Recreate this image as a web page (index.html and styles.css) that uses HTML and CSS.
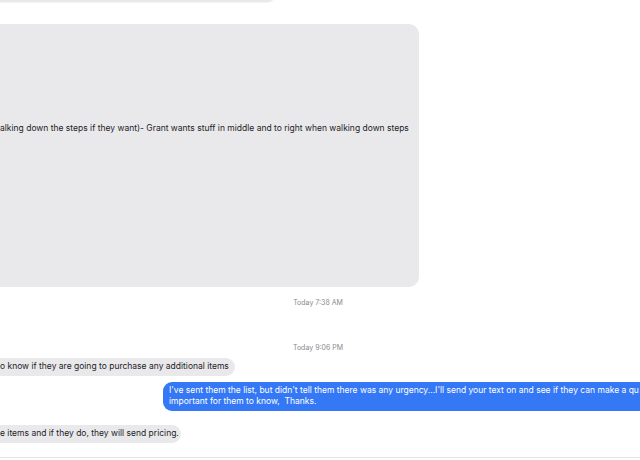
FILE: index.html
```html
<!DOCTYPE html>
<html lang="en">

<head>
    <meta charset="UTF-8">
    <meta name="viewport" content="width=device-width, initial-scale=1.0">
    <title>Messages</title>
    <link rel="stylesheet" href="styles.css">
</head>

<body>
    <div class="chat">
        <!-- Earlier messages -->
        <div class="bubble incoming top-cut"></div>

        <div class="bubble incoming big">
            <p>alking down the steps if they want)- Grant wants stuff in middle and to right when walking down steps</p>
        </div>

        <div class="stamp first">Today 7:38 AM</div>
        <div class="stamp second">Today 9:06 PM</div>

        <div class="bubble incoming small one">
            <p>o know if they are going to purchase any additional items</p>
        </div>

        <div class="bubble outgoing">
            <p>I've sent them the list, but didn't tell them there was any urgency...I'll send your text on and see if they can make a qu<br>important for them to know,&nbsp; Thanks.</p>
        </div>

        <div class="bubble incoming small two">
            <p>e items and if they do, they will send pricing.</p>
        </div>
    </div>

    <div class="composer-edge"></div>
</body>

</html>
```

FILE: styles.css
```css
:root {
    --gray-bubble: #e9e9eb;
    --blue-bubble: #3478f6;
    --text-color: #1d1d1f;
    --stamp-color: #8a8a8e;
}

* {
    margin: 0;
    padding: 0;
    box-sizing: border-box;
}

body {
    width: 640px;
    height: 460px;
    overflow: hidden;
    background: #ffffff;
    font-family: Inter, 'Liberation Sans', sans-serif;
    color: var(--text-color);
}

.chat {
    display: flex;
    flex-direction: column;
    align-items: flex-start;
    height: 457px;
    overflow: hidden;
}

.bubble {
    border-radius: 10px;
    font-size: 8.5px;
    line-height: 11px;
    white-space: nowrap;
}

.incoming {
    background: var(--gray-bubble);
    border-top-left-radius: 0;
    border-bottom-left-radius: 0;
}

.top-cut {
    width: 276px;
    height: 20px;
    margin-top: -18px;
    border-radius: 0 0 9px 0;
    box-shadow: 0 1px 1px rgba(0, 0, 0, 0.05);
}

.big {
    width: 419px;
    height: 263px;
    margin-top: 22px;
    padding-top: 99px;
}

.stamp {
    align-self: stretch;
    text-align: center;
    font-size: 7px;
    line-height: 9px;
    color: var(--stamp-color);
    padding-right: 4px;
}

.stamp.first {
    margin-top: 11px;
}

.stamp.second {
    margin-top: 36px;
}

.small {
    height: 18px;
    border-radius: 0 9px 9px 0;
    padding: 3px 0 0 0;
}

.small.one {
    margin-top: 6px;
    width: 235px;
}

.small.two {
    margin-top: 14px;
    width: 181px;
}

.outgoing {
    margin-top: 6px;
    margin-left: 163px;
    width: 477px;
    height: 29px;
    padding: 3px 0 0 6px;
    border-radius: 9px 0 0 9px;
    background: var(--blue-bubble);
    color: #ffffff;
}

.composer-edge {
    height: 1px;
    background: #e6e6e6;
}
```
